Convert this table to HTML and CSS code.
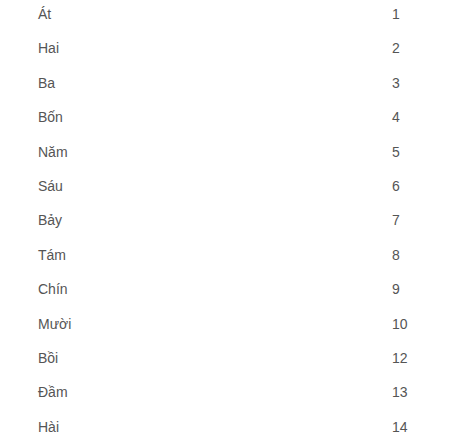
FILE: index.html
```html
<!DOCTYPE html>
<html>
<head>
<meta charset="utf-8">
<link rel="stylesheet" href="styles.css">
</head>
<body>
<div class="list">
  <div class="row"><span class="name">Át</span><span class="num">1</span></div>
  <div class="row"><span class="name">Hai</span><span class="num">2</span></div>
  <div class="row"><span class="name">Ba</span><span class="num">3</span></div>
  <div class="row"><span class="name">Bốn</span><span class="num">4</span></div>
  <div class="row"><span class="name">Năm</span><span class="num">5</span></div>
  <div class="row"><span class="name">Sáu</span><span class="num">6</span></div>
  <div class="row"><span class="name">Bảy</span><span class="num">7</span></div>
  <div class="row"><span class="name">Tám</span><span class="num">8</span></div>
  <div class="row"><span class="name">Chín</span><span class="num">9</span></div>
  <div class="row"><span class="name">Mười</span><span class="num">10</span></div>
  <div class="row"><span class="name">Bồi</span><span class="num">12</span></div>
  <div class="row"><span class="name">Đầm</span><span class="num">13</span></div>
  <div class="row"><span class="name">Hài</span><span class="num">14</span></div>
</div>
</body>
</html>
```
FILE: styles.css
```css
html, body {
  margin: 0;
  padding: 0;
  background: #fff;
}
.list {
  margin-top: -3px;
  padding-left: 38px;
  font-family: "Liberation Sans", Arial, sans-serif;
  font-size: 14px;
  color: #555;
}
.row {
  display: grid;
  grid-template-columns: 354px 1fr;
  height: 34.4px;
  line-height: 34.4px;
}
```
